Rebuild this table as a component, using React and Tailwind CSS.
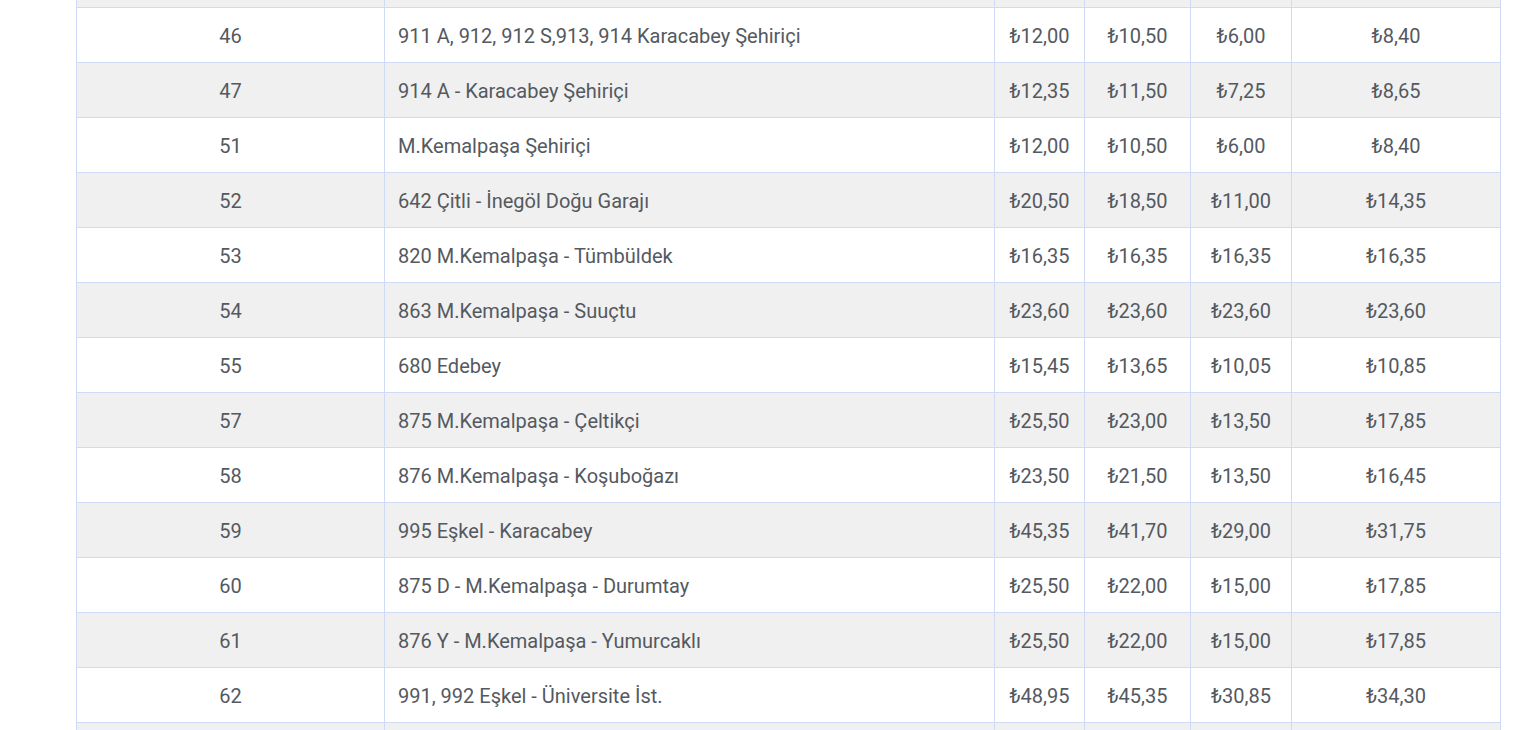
import React from 'react';

const rows = [
  ['a', '', '', '', '', '', ''],
  ['b', '46', '911 A, 912, 912 S,913, 914 Karacabey Şehiriçi', '₺12,00', '₺10,50', '₺6,00', '₺8,40'],
  ['c', '47', '914 A - Karacabey Şehiriçi', '₺12,35', '₺11,50', '₺7,25', '₺8,65'],
  ['d', '51', 'M.Kemalpaşa Şehiriçi', '₺12,00', '₺10,50', '₺6,00', '₺8,40'],
  ['e', '52', '642 Çitli - İnegöl Doğu Garajı', '₺20,50', '₺18,50', '₺11,00', '₺14,35'],
  ['f', '53', '820 M.Kemalpaşa - Tümbüldek', '₺16,35', '₺16,35', '₺16,35', '₺16,35'],
  ['g', '54', '863 M.Kemalpaşa - Suuçtu', '₺23,60', '₺23,60', '₺23,60', '₺23,60'],
  ['h', '55', '680 Edebey', '₺15,45', '₺13,65', '₺10,05', '₺10,85'],
  ['i', '57', '875 M.Kemalpaşa - Çeltikçi', '₺25,50', '₺23,00', '₺13,50', '₺17,85'],
  ['j', '58', '876 M.Kemalpaşa - Koşuboğazı', '₺23,50', '₺21,50', '₺13,50', '₺16,45'],
  ['k', '59', '995 Eşkel - Karacabey', '₺45,35', '₺41,70', '₺29,00', '₺31,75'],
  ['l', '60', '875 D - M.Kemalpaşa - Durumtay', '₺25,50', '₺22,00', '₺15,00', '₺17,85'],
  ['m', '61', '876 Y - M.Kemalpaşa - Yumurcaklı', '₺25,50', '₺22,00', '₺15,00', '₺17,85'],
  ['n', '62', '991, 992 Eşkel - Üniversite İst.', '₺48,95', '₺45,35', '₺30,85', '₺34,30'],
  ['o', '', '', '', '', '', ''],
];

const cell = 'h-[55px] flex items-center pt-px border-l border-b border-[#cfdaf7]';

export default function App() {
  return (
    <div className="h-[730px] overflow-hidden bg-white" style={{ fontFamily: 'Roboto, "Noto Sans", sans-serif' }}>
      <div className="ml-[76px] w-[1425px] -mt-[47px] text-[20px] text-[#54595f]">
        {rows.map(([key, ...r], i) => (
          <div
            key={key}
            className={`grid grid-cols-[308px_610px_90px_106px_101px_210px] ${i % 2 === 0 ? 'bg-[#f0f0f0]' : 'bg-white'}`}
          >
            <div className={`${cell} justify-center`}>{r[0]}</div>
            <div className={`${cell} pl-[13px]`}>{r[1]}</div>
            <div className={`${cell} justify-center`}>{r[2]}</div>
            <div className={`${cell} justify-center`}>{r[3]}</div>
            <div className={`${cell} justify-center`}>{r[4]}</div>
            <div className={`${cell} justify-center border-r`}>{r[5]}</div>
          </div>
        ))}
      </div>
    </div>
  );
}
